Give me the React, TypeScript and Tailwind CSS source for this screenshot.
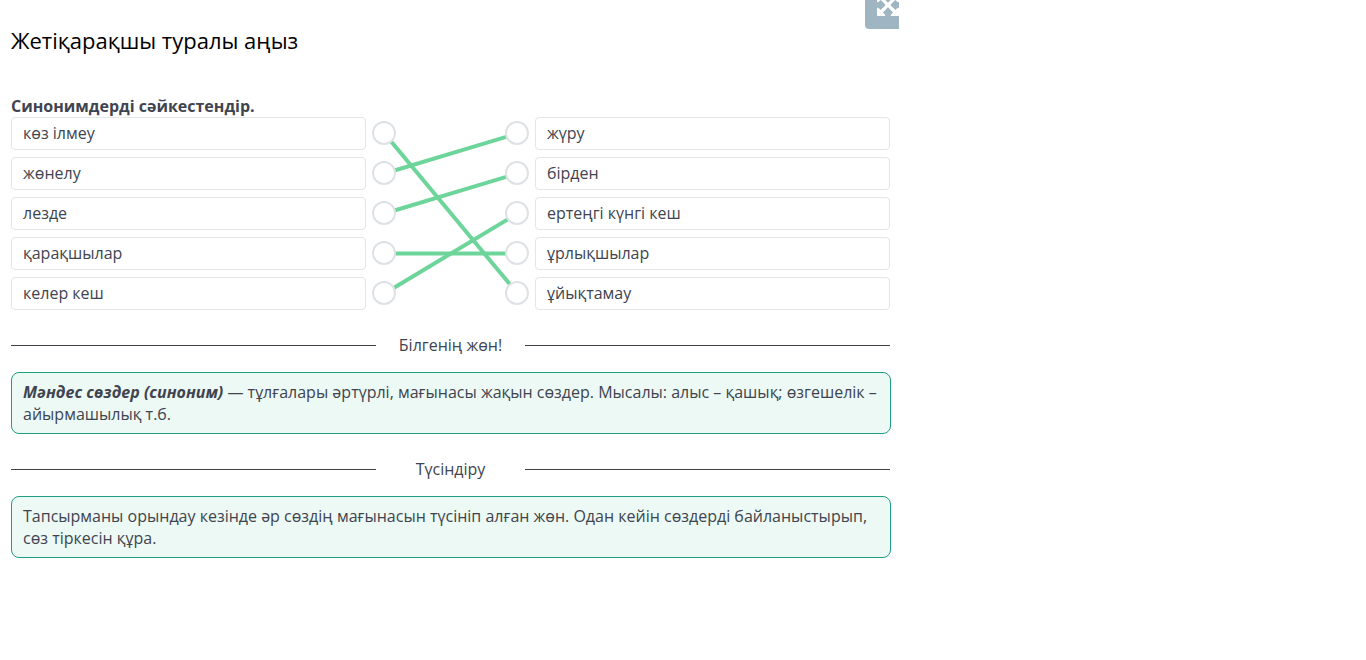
import type { ReactNode } from "react";

const leftWords = ["көз ілмеу", "жөнелу", "лезде", "қарақшылар", "келер кеш"];
const rightWords = ["жүру", "бірден", "ертеңгі күнгі кеш", "ұрлықшылар", "ұйықтамау"];

// [left index, right index]
const pairs = [
  [0, 4],
  [1, 0],
  [2, 1],
  [3, 3],
  [4, 2],
];

const dotY = (i: number) => 16 + i * 40;

function ArrowsIcon() {
  return (
    <svg width="22" height="22" viewBox="128 128 1536 1536" fill="currentColor" aria-hidden="true">
      <path d="M1411 541l-355 355 355 355 144-144q29-31 70-14 39 17 39 59v448q0 26-19 45t-45 19h-448q-42 0-59-40-17-39 14-69l144-144-355-355-355 355 144 144q31 30 14 69-17 40-59 40h-448q-26 0-45-19t-19-45v-448q0-42 40-59 39-17 69 14l144 144 355-355-355-355-144 144q-19 19-45 19-12 0-24-5-40-17-40-59v-448q0-26 19-45t45-19h448q42 0 59 40 17 39-14 69l-144 144 355 355 355-355-144-144q-31-30-14-69 17-40 59-40h448q26 0 45 19t19 45v448q0 42-39 59-13 5-25 5-26 0-45-19z" />
    </svg>
  );
}

function WordColumn({ words }: { words: string[] }) {
  return (
    <ul className="flex w-[355px] flex-col gap-[7px]">
      {words.map((word) => (
        <li
          key={word}
          className="h-[33px] rounded border border-[#e2e5e9] bg-white px-[11px] pt-1 leading-[22px]"
        >
          {word}
        </li>
      ))}
    </ul>
  );
}

function Connections() {
  return (
    <svg width="169" height="193" viewBox="0 0 169 193" className="flex-shrink-0" aria-hidden="true">
      {pairs.map(([from, to]) => (
        <line
          key={from}
          x1="18.5"
          y1={dotY(from) + 0.5}
          x2="151.5"
          y2={dotY(to) + 0.5}
          stroke="#6dd59a"
          strokeWidth="4"
        />
      ))}
      {leftWords.map((_, i) => (
        <g key={i} fill="#fff" stroke="#dee2e6" strokeWidth="2">
          <circle cx="18" cy={dotY(i)} r="11" />
          <circle cx="151" cy={dotY(i)} r="11" />
        </g>
      ))}
    </svg>
  );
}

function Divider({ label }: { label: string }) {
  return (
    <div className="flex h-[22px] w-[879px] items-center">
      <span className="h-px w-[365px] bg-[#3f4047]" />
      <span className="w-[149px] text-center leading-[22px]">{label}</span>
      <span className="h-px w-[365px] bg-[#3f4047]" />
    </div>
  );
}

function Note({ children }: { children: ReactNode }) {
  return (
    <div className="mt-4 h-[62px] w-[880px] rounded-lg border border-[#1f9d83] bg-[#edf9f4] px-[11px] py-2 leading-[22px]">
      {children}
    </div>
  );
}

export default function App() {
  return (
    <div className="relative h-[660px] w-full overflow-hidden bg-white pl-[11px] font-['Open_Sans','Noto_Sans',sans-serif] text-[16px] text-[#40444f]">
      {/* Fullscreen toggle, partly scrolled out of view */}
      <button
        aria-label="Толық экран"
        className="absolute -top-[18px] left-[865px] flex h-[47px] w-[34px] items-center justify-end rounded-bl bg-[#9fb5c1] pb-px text-white"
      >
        <ArrowsIcon />
      </button>

      <h1 className="pt-[25px] text-[22px] leading-[30px] text-black">Жетіқарақшы туралы аңыз</h1>

      <p className="mt-10 font-bold leading-[22px]">Синонимдерді сәйкестендір.</p>

      <div className="flex">
        <WordColumn words={leftWords} />
        <Connections />
        <WordColumn words={rightWords} />
      </div>

      <section className="mt-6">
        <Divider label="Білгенің жөн!" />
        <Note>
          <strong className="font-bold italic">Мәндес сөздер (синоним)</strong> — тұлғалары әртүрлі,
          мағынасы жақын сөздер. Мысалы: алыс – қашық; өзгешелік – айырмашылық т.б.
        </Note>
      </section>

      <section className="mt-6">
        <Divider label="Түсіндіру" />
        <Note>
          Тапсырманы орындау кезінде әр сөздің мағынасын түсініп алған жөн. Одан кейін сөздерді
          байланыстырып, сөз тіркесін құра.
        </Note>
      </section>
    </div>
  );
}
